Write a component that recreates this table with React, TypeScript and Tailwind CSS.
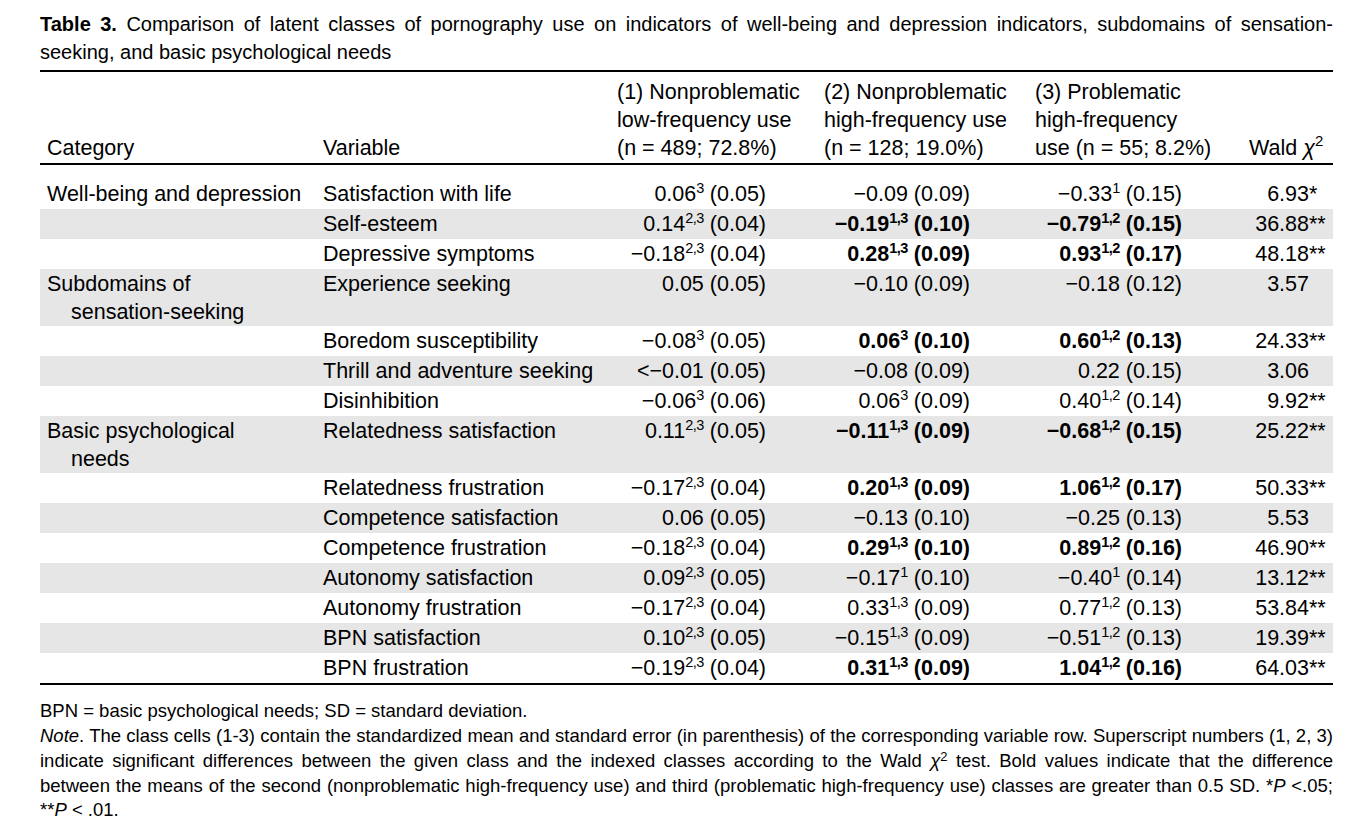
type Cell = { v: string; sup?: string; se?: string; bold?: boolean };

type Row = {
  cat?: [string, string?];
  variable: string;
  c1: Cell;
  c2: Cell;
  c3: Cell;
  wald: string;
  stars?: string;
};

const rows: Row[] = [
  {
    cat: ["Well-being and depression"],
    variable: "Satisfaction with life",
    c1: { v: "0.06", sup: "3", se: "(0.05)" },
    c2: { v: "−0.09", se: "(0.09)" },
    c3: { v: "−0.33", sup: "1", se: "(0.15)" },
    wald: "6.93",
    stars: "*",
  },
  {
    variable: "Self-esteem",
    c1: { v: "0.14", sup: "2,3", se: "(0.04)" },
    c2: { v: "−0.19", sup: "1,3", se: "(0.10)", bold: true },
    c3: { v: "−0.79", sup: "1,2", se: "(0.15)", bold: true },
    wald: "36.88",
    stars: "**",
  },
  {
    variable: "Depressive symptoms",
    c1: { v: "−0.18", sup: "2,3", se: "(0.04)" },
    c2: { v: "0.28", sup: "1,3", se: "(0.09)", bold: true },
    c3: { v: "0.93", sup: "1,2", se: "(0.17)", bold: true },
    wald: "48.18",
    stars: "**",
  },
  {
    cat: ["Subdomains of", "sensation-seeking"],
    variable: "Experience seeking",
    c1: { v: "0.05", se: "(0.05)" },
    c2: { v: "−0.10", se: "(0.09)" },
    c3: { v: "−0.18", se: "(0.12)" },
    wald: "3.57",
  },
  {
    variable: "Boredom susceptibility",
    c1: { v: "−0.08", sup: "3", se: "(0.05)" },
    c2: { v: "0.06", sup: "3", se: "(0.10)", bold: true },
    c3: { v: "0.60", sup: "1,2", se: "(0.13)", bold: true },
    wald: "24.33",
    stars: "**",
  },
  {
    variable: "Thrill and adventure seeking",
    c1: { v: "<−0.01", se: "(0.05)" },
    c2: { v: "−0.08", se: "(0.09)" },
    c3: { v: "0.22", se: "(0.15)" },
    wald: "3.06",
  },
  {
    variable: "Disinhibition",
    c1: { v: "−0.06", sup: "3", se: "(0.06)" },
    c2: { v: "0.06", sup: "3", se: "(0.09)" },
    c3: { v: "0.40", sup: "1,2", se: "(0.14)" },
    wald: "9.92",
    stars: "**",
  },
  {
    cat: ["Basic psychological", "needs"],
    variable: "Relatedness satisfaction",
    c1: { v: "0.11", sup: "2,3", se: "(0.05)" },
    c2: { v: "−0.11", sup: "1,3", se: "(0.09)", bold: true },
    c3: { v: "−0.68", sup: "1,2", se: "(0.15)", bold: true },
    wald: "25.22",
    stars: "**",
  },
  {
    variable: "Relatedness frustration",
    c1: { v: "−0.17", sup: "2,3", se: "(0.04)" },
    c2: { v: "0.20", sup: "1,3", se: "(0.09)", bold: true },
    c3: { v: "1.06", sup: "1,2", se: "(0.17)", bold: true },
    wald: "50.33",
    stars: "**",
  },
  {
    variable: "Competence satisfaction",
    c1: { v: "0.06", se: "(0.05)" },
    c2: { v: "−0.13", se: "(0.10)" },
    c3: { v: "−0.25", se: "(0.13)" },
    wald: "5.53",
  },
  {
    variable: "Competence frustration",
    c1: { v: "−0.18", sup: "2,3", se: "(0.04)" },
    c2: { v: "0.29", sup: "1,3", se: "(0.10)", bold: true },
    c3: { v: "0.89", sup: "1,2", se: "(0.16)", bold: true },
    wald: "46.90",
    stars: "**",
  },
  {
    variable: "Autonomy satisfaction",
    c1: { v: "0.09", sup: "2,3", se: "(0.05)" },
    c2: { v: "−0.17", sup: "1", se: "(0.10)" },
    c3: { v: "−0.40", sup: "1", se: "(0.14)" },
    wald: "13.12",
    stars: "**",
  },
  {
    variable: "Autonomy frustration",
    c1: { v: "−0.17", sup: "2,3", se: "(0.04)" },
    c2: { v: "0.33", sup: "1,3", se: "(0.09)" },
    c3: { v: "0.77", sup: "1,2", se: "(0.13)" },
    wald: "53.84",
    stars: "**",
  },
  {
    variable: "BPN satisfaction",
    c1: { v: "0.10", sup: "2,3", se: "(0.05)" },
    c2: { v: "−0.15", sup: "1,3", se: "(0.09)" },
    c3: { v: "−0.51", sup: "1,2", se: "(0.13)" },
    wald: "19.39",
    stars: "**",
  },
  {
    variable: "BPN frustration",
    c1: { v: "−0.19", sup: "2,3", se: "(0.04)" },
    c2: { v: "0.31", sup: "1,3", se: "(0.09)", bold: true },
    c3: { v: "1.04", sup: "1,2", se: "(0.16)", bold: true },
    wald: "64.03",
    stars: "**",
  },
];

const cols = "grid grid-cols-[276px_294px_207px_211px_214px_91px]";
const shaded = [1, 3, 5, 7, 9, 11, 13];

function Value({ cell, pad }: { cell: Cell; pad: string }) {
  return (
    <div className={`text-right whitespace-nowrap ${pad} ${cell.bold ? "font-bold" : ""}`}>
      {cell.v}
      {cell.sup && (
        <sup className="text-[14.5px] top-[-0.55em] tracking-[-0.5px]">{cell.sup}</sup>
      )}{" "}
      {cell.se}
    </div>
  );
}

export default function App() {
  return (
    <div className="min-h-screen bg-white text-black font-['Liberation_Sans',Arial,sans-serif]">
      <div className="ml-[40px] w-[1293px] pt-[10px]">
        <div className="text-[20px] leading-[28px]">
          <div className="text-justify [text-align-last:justify]">
            <span className="font-bold">Table 3.</span> Comparison of latent classes of pornography use on
            indicators of well-being and depression indicators, subdomains of sensation-
          </div>
          <div>seeking, and basic psychological needs</div>
        </div>

        <div className="mt-[4px] h-[2px] bg-black" />

        <div className={`${cols} text-[21.5px] leading-[28px] pt-[6px] pb-[1px] items-end`}>
          <div className="pl-[7px]">Category</div>
          <div className="pl-[7px]">Variable</div>
          <div className="pl-[7px] whitespace-nowrap">
            (1) Nonproblematic
            <br />
            low-frequency use
            <br />
            (n = 489; 72.8%)
          </div>
          <div className="pl-[7px] whitespace-nowrap">
            (2) Nonproblematic
            <br />
            high-frequency use
            <br />
            (n = 128; 19.0%)
          </div>
          <div className="pl-[7px] whitespace-nowrap">
            (3) Problematic
            <br />
            high-frequency
            <br />
            use (n = 55; 8.2%)
          </div>
          <div className="pl-[7px] whitespace-nowrap">
            Wald <span className="italic">χ</span>
            <sup className="text-[15px] top-[-0.6em]">2</sup>
          </div>
        </div>

        <div className="h-[2px] bg-black" />

        <div className="pt-[14px] text-[21.5px] leading-[28px]">
          {rows.map((r, i) => (
            <div
              key={i}
              className={`${cols} ${r.cat?.[1] ? "pt-px" : "py-px"} ${shaded.includes(i) ? "bg-[#e6e6e6]" : ""}`}
            >
              <div className="pl-[7px] whitespace-nowrap">
                {r.cat && (
                  <>
                    <div>{r.cat[0]}</div>
                    {r.cat[1] && <div className="pl-[24px]">{r.cat[1]}</div>}
                  </>
                )}
              </div>
              <div className="pl-[7px] whitespace-nowrap">{r.variable}</div>
              <Value cell={r.c1} pad="pr-[51px]" />
              <Value cell={r.c2} pad="pr-[58px]" />
              <Value cell={r.c3} pad="pr-[60px]" />
              <div className="flex justify-end whitespace-nowrap">
                <span>{r.wald}</span>
                <span className="w-[24px] text-left">{r.stars}</span>
              </div>
            </div>
          ))}
        </div>

        <div className="h-[2px] bg-black" />

        <div className="pt-[13px] text-[18.5px] leading-[25px]">
          <div>BPN = basic psychological needs; SD = standard deviation.</div>
          <div className="text-justify [text-align-last:justify]">
            <span className="italic">Note</span>. The class cells (1-3) contain the standardized mean and standard
            error (in parenthesis) of the corresponding variable row. Superscript numbers (1, 2, 3)
          </div>
          <div className="text-justify [text-align-last:justify]">
            indicate significant differences between the given class and the indexed classes according to the Wald{" "}
            <span className="italic">χ</span>
            <sup className="text-[13px]">2</sup> test. Bold values indicate that the difference
          </div>
          <div className="text-justify [text-align-last:justify]">
            between the means of the second (nonproblematic high-frequency use) and third (problematic
            high-frequency use) classes are greater than 0.5 SD. *<span className="italic">P</span> &lt;.05;
          </div>
          <div className="leading-[23px]">
            **<span className="italic">P</span> &lt; .01.
          </div>
        </div>
      </div>
    </div>
  );
}
